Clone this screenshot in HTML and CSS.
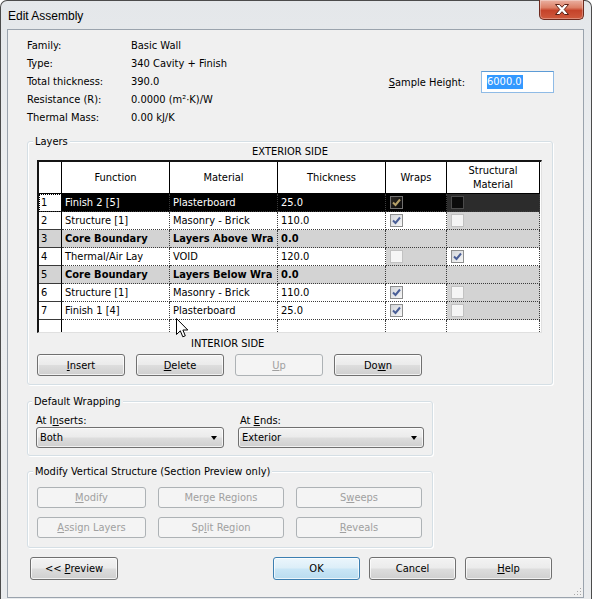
FILE: index.html
```html
<!DOCTYPE html>
<html>
<head>
<meta charset="utf-8">
<title>Edit Assembly</title>
<link rel="stylesheet" href="styles.css">
</head>
<body>
<div class="window">
  <div class="titlebar">
    <span class="title">Edit Assembly</span>
    <div class="close">
      <svg width="14" height="11" viewBox="0 0 14 11"><path d="M0.5 0.5H4.5L7 3.3L9.5 0.5H13.5L9.2 5.5L13.5 10.5H9.5L7 7.7L4.5 10.5H0.5L4.8 5.5Z" fill="#fff" stroke="#5b2015" stroke-width="1"/></svg>
    </div>
  </div>
  <div class="client">
    <div class="info">
      <div class="props">
        <span>Family:</span><span>Basic Wall</span>
        <span>Type:</span><span>340 Cavity + Finish</span>
        <span>Total thickness:</span><span>390.0</span>
        <span>Resistance (R):</span><span>0.0000 (m²·K)/W</span>
        <span>Thermal Mass:</span><span>0.00 kJ/K</span>
      </div>
      <div class="sample">
        <span><u>S</u>ample Height:</span>
        <div class="textbox"><span class="sel">6000.0</span></div>
      </div>
    </div>

    <div class="group layers">
      <div class="group-title">Layers</div>
      <div class="side ext">EXTERIOR SIDE</div>
      <div class="grid-box">
        <div class="grid">
          <div class="h"></div><div class="h">Function</div><div class="h">Material</div><div class="h">Thickness</div><div class="h">Wraps</div><div class="h">Structural<br>Material</div>

          <div class="n focus">1</div><div class="c sel-row">Finish 2 [5]</div><div class="c sel-row">Plasterboard</div><div class="c sel-row">25.0</div><div class="c sel-row"><span class="cb sel-cb"><svg width="11" height="11" viewBox="0 0 11 11"><path d="M2 5.5 4.5 8 9 2.5" fill="none" stroke="currentColor" stroke-width="2"/></svg></span></div><div class="c sel-gray"><span class="cb sel-cb2"></span></div>

          <div class="n">2</div><div class="c">Structure [1]</div><div class="c">Masonry - Brick</div><div class="c">110.0</div><div class="c"><span class="cb"><svg width="11" height="11" viewBox="0 0 11 11"><path d="M2 5.5 4.5 8 9 2.5" fill="none" stroke="currentColor" stroke-width="2"/></svg></span></div><div class="c gray"><span class="cb dis"></span></div>

          <div class="n gray">3</div><div class="c gray b">Core Boundary</div><div class="c gray b">Layers Above Wra</div><div class="c gray b">0.0</div><div class="c gray"></div><div class="c gray"></div>

          <div class="n">4</div><div class="c">Thermal/Air Lay</div><div class="c">VOID</div><div class="c">120.0</div><div class="c gray"><span class="cb dis"></span></div><div class="c"><span class="cb"><svg width="11" height="11" viewBox="0 0 11 11"><path d="M2 5.5 4.5 8 9 2.5" fill="none" stroke="currentColor" stroke-width="2"/></svg></span></div>

          <div class="n gray">5</div><div class="c gray b">Core Boundary</div><div class="c gray b">Layers Below Wra</div><div class="c gray b">0.0</div><div class="c gray"></div><div class="c gray"></div>

          <div class="n">6</div><div class="c">Structure [1]</div><div class="c">Masonry - Brick</div><div class="c">110.0</div><div class="c"><span class="cb"><svg width="11" height="11" viewBox="0 0 11 11"><path d="M2 5.5 4.5 8 9 2.5" fill="none" stroke="currentColor" stroke-width="2"/></svg></span></div><div class="c gray"><span class="cb dis"></span></div>

          <div class="n">7</div><div class="c">Finish 1 [4]</div><div class="c">Plasterboard</div><div class="c">25.0</div><div class="c"><span class="cb"><svg width="11" height="11" viewBox="0 0 11 11"><path d="M2 5.5 4.5 8 9 2.5" fill="none" stroke="currentColor" stroke-width="2"/></svg></span></div><div class="c gray"><span class="cb dis"></span></div>

          <div class="n"></div><div class="c"></div><div class="c"></div><div class="c"></div><div class="c"></div><div class="c"></div>
        </div>
      </div>
      <div class="side int">INTERIOR SIDE</div>
      <div class="btn-row">
        <div class="btn"><span><u>I</u>nsert</span></div>
        <div class="btn"><span><u>D</u>elete</span></div>
        <div class="btn disabled"><span><u>U</u>p</span></div>
        <div class="btn"><span>Do<u>w</u>n</span></div>
      </div>
    </div>

    <div class="group wrapping">
      <div class="group-title">Default Wrapping</div>
      <div class="wrap-cols">
        <div class="wrap-col">
          <div class="wlabel">At I<u>n</u>serts:</div>
          <div class="combo"><span>Both</span><span class="arrow"></span></div>
        </div>
        <div class="wrap-col">
          <div class="wlabel second">At <u>E</u>nds:</div>
          <div class="combo"><span>Exterior</span><span class="arrow"></span></div>
        </div>
      </div>
    </div>

    <div class="group modify">
      <div class="group-title">Modify Vertical Structure (Section Preview only)</div>
      <div class="mod-grid">
        <div class="btn disabled"><span><u>M</u>odify</span></div>
        <div class="btn disabled"><span>Mer<u>g</u>e Regions</span></div>
        <div class="btn disabled"><span>S<u>w</u>eeps</span></div>
        <div class="btn disabled"><span><u>A</u>ssign Layers</span></div>
        <div class="btn disabled"><span>Sp<u>l</u>it Region</span></div>
        <div class="btn disabled"><span><u>R</u>eveals</span></div>
      </div>
    </div>

    <div class="footer">
      <div class="btn fbtn preview"><span>&lt;&lt; <u>P</u>review</span></div>
      <div class="btn fbtn default ok"><span>OK</span></div>
      <div class="btn fbtn"><span>Cancel</span></div>
      <div class="btn fbtn"><span><u>H</u>elp</span></div>
    </div>

    <svg class="grip" width="10" height="10" viewBox="0 0 10 10">
      <g fill="#a8a8a8"><rect x="8" y="2" width="1" height="1"/><rect x="5" y="5" width="1" height="1"/><rect x="8" y="5" width="1" height="1"/><rect x="2" y="8" width="1" height="1"/><rect x="5" y="8" width="1" height="1"/><rect x="8" y="8" width="1" height="1"/></g>
    </svg>
  </div>

  <svg class="cursor" width="13" height="21" viewBox="0 0 13 21">
    <path d="M0.5 0.5V16.5L4.3 12.8L6.8 18.8L9.3 17.8L6.9 12H11.8Z" fill="#fff" stroke="#000" stroke-width="1" stroke-linejoin="miter"/>
  </svg>
</div>
</body>
</html>
```

FILE: styles.css
```css
html, body {
  margin: 0;
  padding: 0;
  background: #fff;
  overflow: hidden;
}
body {
  font-family: "DejaVu Sans Condensed", "DejaVu Sans", "Liberation Sans", sans-serif;
  font-stretch: condensed;
  font-size: 11px;
  color: #000;
}
u { text-decoration: underline; text-underline-offset: 1px; }

.window {
  position: relative;
  width: 592px;
  height: 599px;
  box-sizing: border-box;
  border: 1px solid #4b4b4b;
  border-bottom: none;
  border-radius: 7px 7px 0 0;
  background: linear-gradient(180deg, #e4e7ea 0%, #eceef0 30%, #e9ebed 100%);
  display: flex;
  flex-direction: column;
}

.titlebar {
  height: 28px;
  flex: none;
  display: flex;
  align-items: flex-start;
  padding: 0 7px;
}
.title {
  font-family: "Liberation Sans", Arial, sans-serif;
  font-stretch: normal;
  font-size: 12px;
  line-height: 14px;
  margin-top: 8px;
}
.close {
  margin-left: auto;
  margin-top: -1px;
  width: 45px;
  height: 20px;
  box-sizing: border-box;
  border: 1px solid #6d2a1e;
  border-top: none;
  border-radius: 0 0 5px 5px;
  background: linear-gradient(180deg, #eab1a2 0%, #dc7f66 40%, #c5432a 55%, #cf5a3d 100%);
  box-shadow: inset 0 0 0 1px rgba(255, 255, 255, 0.3);
  display: flex;
  align-items: center;
  justify-content: center;
}

.client {
  position: relative;
  flex: 1;
  margin: 0 7px 1px 6px;
  border: 1px solid #9aa3ad;
  background: #f0f0f0;
  display: flex;
  flex-direction: column;
}

/* info */
.info {
  display: flex;
  padding: 7px 0 0 19px;
}
.props {
  display: grid;
  grid-template-columns: 104px auto;
  line-height: 18px;
}
.sample {
  margin-left: auto;
  margin-top: 34px;
  margin-right: 29px;
  display: flex;
  align-items: center;
  gap: 16px;
  align-self: flex-start;
}
.textbox {
  width: 73px;
  height: 22px;
  box-sizing: border-box;
  border: 1px solid #8fbbe6;
  border-top-color: #5c9bd6;
  background: #fff;
  padding: 3px 0 0 5px;
}
.sel {
  display: inline-block;
  background: #3399ff;
  color: #fff;
  line-height: 14px;
  padding-right: 1px;
}

/* group boxes */
.group {
  margin-left: 19px;
  border: 1px solid #d5dfe5;
  border-radius: 3px;
  box-shadow: inset 1px 1px 0 #fff, 1px 1px 0 #fff;
  display: flex;
  flex-direction: column;
}
.group-title {
  width: fit-content;
  line-height: 13px;
  margin: -7px 0 0 -4px;
  padding: 0 2px;
  background: #f0f0f0;
}

.layers {
  width: 526px;
  box-sizing: border-box;
  margin-top: 14px;
  padding: 0 9px 8px 9px;
}
.layers .group-title { margin-bottom: -4px; }
.side { line-height: 14px; }
.ext { text-align: center; padding-top: 1px; margin-bottom: 1px; }
.int { margin-top: 4px; padding-left: 154px; }

.grid-box {
  width: 505px;
  height: 173px;
  box-sizing: border-box;
  border-left: 2px solid #141414;
  border-top: 2px solid #141414;
  border-right: 1px solid #e0e0e0;
  border-bottom: 1px solid #e0e0e0;
  background: #fff;
  overflow: hidden;
}
.grid {
  display: grid;
  grid-template-columns: 23px 108px 108px 108px 61px 93px;
  grid-template-rows: 32px;
  grid-auto-rows: 18px;
}
.grid > div { box-sizing: border-box; }
.h {
  border-right: 1px solid #000;
  border-bottom: 1px solid #000;
  display: flex;
  align-items: center;
  justify-content: center;
  text-align: center;
  line-height: 14px;
  padding-top: 1px;
  background: #fff;
}
.c {
  border-right: 1px dotted #3c3c3c;
  border-bottom: 1px dotted #3c3c3c;
  padding-left: 3px;
  display: flex;
  align-items: center;
  white-space: nowrap;
  overflow: hidden;
  background: #fff;
}
.n {
  border-right: 1px solid #000;
  border-bottom: 1px solid #3a3a3a;
  padding-left: 2px;
  display: flex;
  align-items: center;
  background: #fff;
}
.n.focus {
  outline: 1px dotted #000;
  outline-offset: -1px;
}
.gray { background: #d3d3d3; }
.b { font-weight: bold; }
.sel-row { background: #000; color: #fff; }
.sel-gray { background: #2c2c2c; }

.cb {
  width: 13px;
  height: 13px;
  box-sizing: border-box;
  margin-left: 1px;
  border: 1px solid #8e8f8f;
  background: linear-gradient(135deg, #d3d6da 0%, #f7f7f7 100%);
  color: #4a5f97;
  display: flex;
  align-items: center;
  justify-content: center;
}
.cb.dis {
  border-color: #c2c2c2;
  background: #f5f5f5;
}
.cb.sel-cb {
  border-color: #717070;
  background: linear-gradient(135deg, #2c2925 0%, #080808 100%);
  color: #b5a068;
}
.cb.sel-cb2 {
  border-color: #4a4a4a;
  background: #0b0b0b;
}

/* buttons */
.btn {
  box-sizing: border-box;
  height: 22px;
  border: 1px solid #707070;
  border-radius: 3px;
  background: linear-gradient(180deg, #f3f3f3 0%, #ebebeb 48%, #dddddd 52%, #cfcfcf 100%);
  box-shadow: inset 0 0 0 1px rgba(255, 255, 255, 0.7);
  display: flex;
  align-items: center;
  justify-content: center;
  white-space: nowrap;
}
.btn.disabled {
  border-color: #adb2b5;
  background: #f4f4f4;
  color: #a0a0a0;
  box-shadow: none;
}
.btn.default {
  border-color: #3c7fb1;
  background: linear-gradient(180deg, #ebf6fc 0%, #dceef8 48%, #c9e6f6 52%, #b9dcef 100%);
}

.btn-row {
  display: flex;
  gap: 11px;
  margin-top: 3px;
}
.btn-row .btn { width: 88px; }

/* default wrapping */
.wrapping {
  width: 406px;
  box-sizing: border-box;
  margin-top: 16px;
  padding: 0 8px 7px 8px;
}
.wrap-cols {
  display: grid;
  grid-template-columns: 188px 186px;
  column-gap: 14px;
  margin-top: 7px;
}
.wlabel { line-height: 12px; }
.wlabel.second { padding-left: 2px; }
.combo {
  box-sizing: border-box;
  height: 21px;
  border: 1px solid #707070;
  border-radius: 3px;
  background: linear-gradient(180deg, #f3f3f3 0%, #ebebeb 48%, #dddddd 52%, #cfcfcf 100%);
  box-shadow: inset 0 0 0 1px rgba(255, 255, 255, 0.7);
  display: flex;
  align-items: center;
  justify-content: space-between;
  padding: 0 6px 0 3px;
}
.arrow {
  width: 0;
  height: 0;
  border-left: 3.5px solid transparent;
  border-right: 3.5px solid transparent;
  border-top: 4px solid #000;
}

/* modify */
.modify {
  width: 406px;
  box-sizing: border-box;
  margin-top: 15px;
  padding: 0 9px 9px 9px;
}
.mod-grid {
  display: grid;
  grid-template-columns: 109px 126px 126px;
  grid-auto-rows: 21px;
  column-gap: 12px;
  row-gap: 9px;
  margin-top: 9px;
}
.mod-grid .btn { height: 21px; }

/* footer */
.footer {
  display: flex;
  gap: 9px;
  margin-top: 9px;
  padding: 0 31px 0 22px;
}
.fbtn { width: 87px; height: 23px; }
.fbtn.preview { width: 88px; }
.fbtn.ok { margin-left: auto; }

.grip {
  position: absolute;
  right: 1px;
  bottom: 1px;
}
.cursor {
  position: absolute;
  left: 175px;
  top: 317px;
}
```
